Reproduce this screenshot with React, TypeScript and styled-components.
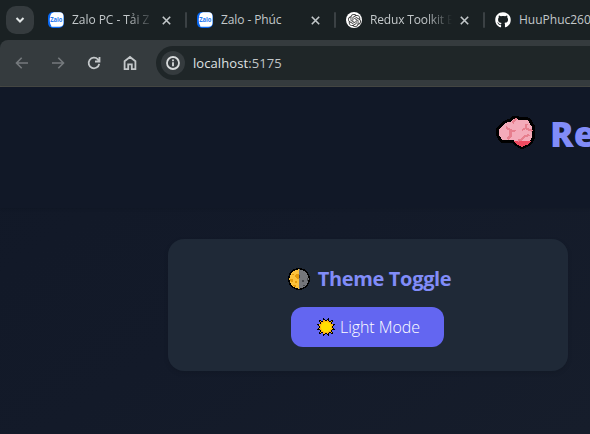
import React from "react";
import styled, { createGlobalStyle } from "styled-components";
import { FaGithub } from "react-icons/fa";
import { SiOpenai } from "react-icons/si";

const GlobalStyle = createGlobalStyle`
  * { box-sizing: border-box; }
  html, body { margin: 0; overflow: hidden; }
  body { font-family: "Open Sans", "Noto Sans", sans-serif; background: #111827; }
  svg { display: block; flex: none; }
`;

const Window = styled.div`
  width: 590px;
  height: 434px;
  overflow: hidden;
  display: flex;
  flex-direction: column;
`;

const TabStrip = styled.div`
  height: 40px;
  flex: none;
  display: flex;
  align-items: center;
  padding-left: 6px;
  background: #1a2123;
`;

const TabSearch = styled.div`
  width: 28px;
  height: 28px;
  flex: none;
  border-radius: 10px;
  background: #353b3e;
  display: grid;
  place-items: center;
  margin-right: 14px;
`;

const Tab = styled.div`
  width: 149px;
  height: 16px;
  flex: none;
  display: flex;
  align-items: center;
`;

const TabTitle = styled.span<{ $spacing: number; $fade?: boolean }>`
  width: 82px;
  margin-left: 8px;
  overflow: hidden;
  white-space: nowrap;
  font: 400 12px/18px "Open Sans", "Noto Sans", sans-serif;
  letter-spacing: ${(p) => p.$spacing}px;
  color: #c3c8ca;
  ${(p) => p.$fade && "mask-image: linear-gradient(to right, #000 56px, transparent 82px);"}
`;

const CloseSlot = styled.span`
  width: 9px;
  margin-left: 8px;
`;

const Separator = styled.span`
  width: 2px;
  height: 16px;
  margin-left: 14px;
  border-radius: 1px;
  background: #3b4144;
`;

const Favicon = styled.span<{ $round?: boolean }>`
  width: 16px;
  height: 16px;
  flex: none;
  display: grid;
  place-items: center;
  border-radius: ${(p) => (p.$round ? "8px" : "0")};
  background: ${(p) => (p.$round ? "#fff" : "transparent")};
  color: #333;
`;

const Frame = styled.div`
  height: 47px;
  flex: none;
  background: #1a2123;
`;

const Toolbar = styled.div`
  height: 47px;
  display: flex;
  align-items: center;
  padding-left: 14px;
  background: #353b3e;
  border-bottom: 1px solid #464844;
  border-top-left-radius: 8px;
`;

const NavIcon = styled.span<{ $dim?: boolean }>`
  width: 16px;
  height: 16px;
  margin-right: 20px;
  color: ${(p) => (p.$dim ? "#757a7d" : "#c4c8ca")};
`;

const AddressBar = styled.div`
  height: 34px;
  flex: 1;
  margin-left: -2px;
  display: flex;
  align-items: center;
  padding-left: 5px;
  border-radius: 17px 0 0 17px;
  background: #1f2628;
`;

const SiteInfo = styled.span`
  width: 24px;
  height: 24px;
  border-radius: 12px;
  display: grid;
  place-items: center;
  background: #353b3e;
  color: #d9dcdd;
`;

const Url = styled.span`
  margin-left: 8px;
  font: 400 13px/20px "Open Sans", "Noto Sans", sans-serif;
  letter-spacing: 0.08px;
  color: #dfe2e3;
`;

const Port = styled.span`
  color: #c0c5c7;
`;

const Page = styled.main`
  flex: 1;
  background: linear-gradient(145deg, #111827 0%, #131a29 50%, #161d2b 100%);
`;

const Header = styled.header`
  height: 121px;
  padding: 24px 0 0 496px;
  display: flex;
  align-items: flex-start;
  gap: 14px;
  overflow: hidden;
  background: #111827;
  box-shadow: 0 1px 3px rgba(0, 0, 0, 0.1);
`;

const BrandTitle = styled.h1`
  margin: 0;
  font: 800 35px/46px "Open Sans", "Noto Sans", sans-serif;
  color: #818cf8;
`;

const BrainSlot = styled.span`
  margin-top: 4px;
`;

const Card = styled.section`
  width: 400px;
  height: 132px;
  margin: 31px 0 0 168px;
  padding-top: 26px;
  display: flex;
  flex-direction: column;
  align-items: center;
  border-radius: 16px;
  background: #1f2937;
  box-shadow: 0 2px 5px rgba(0, 0, 0, 0.1);
`;

const CardTitle = styled.h2`
  margin: 0 0 0 3px;
  height: 28px;
  display: flex;
  align-items: center;
  gap: 8px;
  font: 700 20px/28px "Open Sans", "Noto Sans", sans-serif;
  letter-spacing: -0.33px;
  color: #818cf8;
`;

const ModeButton = styled.button`
  width: 153px;
  height: 40px;
  margin: 14px 0 0 -1px;
  padding: 0 0 0 2px;
  border: 0;
  border-radius: 12px;
  display: flex;
  align-items: center;
  justify-content: center;
  gap: 5px;
  background: #6366f1;
  color: #fff;
  font: 300 16px/24px "Open Sans", "Noto Sans", sans-serif;
  letter-spacing: -0.06px;
`;

const ZaloIcon = () => (
  <svg width="16" height="16" viewBox="0 0 16 16">
    <rect width="16" height="16" rx="5" fill="#0868f2" />
    <path d="M6 .3h5.500a4 4 0 0 1 4 4v6.500a4 4 0 0 1-4 4H6c-1 0-1.600.2-2.600-.1C3.500 14 3 13.300 2.600 12.500 1.200 9 1.600 3.500 3.600 1.200z" fill="#fff" />
    <text x="2.200" y="10" fontFamily="Open Sans, sans-serif" fontWeight="700" fontSize="6.500" textLength="12.300" lengthAdjust="spacingAndGlyphs" fill="#2877f0">Zalo</text>
  </svg>
);

const CloseIcon = () => (
  <svg width="9" height="9" viewBox="0 0 9 9" stroke="#c3c8ca" strokeWidth="1.600">
    <path d="M.8.8l7.400 7.400M8.200.8L.8 8.200" />
  </svg>
);

const ArrowIcon = ({ forward }: { forward?: boolean }) => (
  <svg width="16" height="16" viewBox="0 0 16 16" fill="none" stroke="currentColor" strokeWidth="1.600">
    <path d={forward ? "M2 8h11M8.300 2.800L13.500 8l-5.200 5.200" : "M14 8H3M7.700 2.800L2.500 8l5.200 5.200"} />
  </svg>
);

const ReloadIcon = () => (
  <svg width="16" height="16" viewBox="0 0 16 16" fill="none" stroke="currentColor" strokeWidth="1.800">
    <path d="M13.200 8.800A5.300 5.300 0 1 1 11.900 4.400L13.500 6M13.500 2v4.500H9" />
  </svg>
);

const HomeIcon = () => (
  <svg width="16" height="16" viewBox="0 0 16 16" fill="none" stroke="currentColor" strokeWidth="1.800">
    <path d="M2.600 14.200V6.200L8 2l5.400 4.200v8H9.800V9.300H6.200v4.900z" />
  </svg>
);

const InfoIcon = () => (
  <svg width="14" height="14" viewBox="0 0 14 14" fill="none" stroke="currentColor" strokeWidth="1.800">
    <circle cx="7" cy="7" r="6" />
    <path d="M7 6.200v4M7 3.600v1.600" />
  </svg>
);

const ChevronIcon = () => (
  <svg width="10" height="8" viewBox="0 0 10 8" fill="none" stroke="#e1e5e6" strokeWidth="2">
    <path d="M1.500 2L5 5.500 8.500 2" />
  </svg>
);

const BrainIcon = () => (
  <svg width="40" height="36" viewBox="0 0 40 36" shapeRendering="crispEdges">
    <path
      d="M5.500 10L8 7.500 12 5.500 14.500 5 17 2.500 20 2 24 3.500 30 3 34 5 35.500 9 38 12 37.500 17 38 21 36 26 32 30 26 33 21 30 16.500 26 5 26 2 21 1.800 14z"
      fill="#f4abba"
      stroke="#000"
      strokeWidth="3"
      strokeLinejoin="round"
    />
    <path d="M17.500 26h17.500l-3.500 3.500-5.500 2.500-5-2.500z" fill="#ef4b61" />
    <path d="M10 12l4.500 3.500 5 .3M14.500 15.500v5.500l-3 3M20.500 3.500l-4 4.500M30.500 9l-.5 4-4 2M30 13.500l6.500 2.500M33.500 20l-5 1.500-3.500 3.500-3 .5" fill="none" stroke="#e77f8e" strokeWidth="2.200" />
  </svg>
);

const MoonIcon = () => (
  <svg width="22" height="22" viewBox="0 0 22 22" shapeRendering="crispEdges">
    <circle cx="11" cy="11" r="11" fill="#000" />
    <circle cx="11" cy="11" r="9.700" fill="#fdc33b" />
    <path d="M11 1.300a9.700 9.700 0 0 1 0 19.400z" fill="#74767a" />
    <path d="M8 6h3v5H9L7 9zM2 11h3v3H3zM7 13h2v2H7zM4 6h2v1H4zM5 17h3v2H6z" fill="#e59b0b" />
    <path d="M11 7h1v3h-1zM14 12h2v2h-2zM19 10h1v3h-1zM15 17h2v1h-2z" fill="#45474a" />
  </svg>
);

const sunPoints = (outer: number, inner: number) =>
  Array.from({ length: 24 }, (_, i) => {
    const radius = i % 2 ? inner : outer;
    const angle = (i * Math.PI) / 12 + Math.PI / 12;
    return `${9 + radius * Math.cos(angle)},${9 + radius * Math.sin(angle)}`;
  }).join(" ");

const SunIcon = () => (
  <svg width="18" height="18" viewBox="0 0 18 18" shapeRendering="crispEdges">
    <polygon points={sunPoints(10, 6.8)} fill="#000" />
    <polygon points={sunPoints(8.2, 5.8)} fill="#ffb514" />
    <circle cx="9" cy="9" r="5" fill="#ffde00" />
  </svg>
);

const tabs = [
  { title: "Zalo PC - Tải Z", icon: <ZaloIcon />, spacing: -0.05, fade: true },
  { title: "Zalo - Phúc", icon: <ZaloIcon />, spacing: -0.1 },
  { title: "Redux Toolkit E", icon: <SiOpenai size={13} />, round: true, spacing: -0.15, fade: true },
];

export default function App() {
  return (
    <Window>
      <GlobalStyle />
      <TabStrip>
        <TabSearch><ChevronIcon /></TabSearch>
        {tabs.map((tab) => (
          <Tab key={tab.title}>
            <Favicon $round={tab.round}>{tab.icon}</Favicon>
            <TabTitle $spacing={tab.spacing} $fade={tab.fade}>{tab.title}</TabTitle>
            <CloseSlot><CloseIcon /></CloseSlot>
            <Separator />
          </Tab>
        ))}
        <Tab>
          <Favicon><FaGithub size={16} color="#fff" /></Favicon>
          <TabTitle $spacing={0}>HuuPhuc260</TabTitle>
        </Tab>
      </TabStrip>
      <Frame>
        <Toolbar>
          <NavIcon $dim><ArrowIcon /></NavIcon>
          <NavIcon $dim><ArrowIcon forward /></NavIcon>
          <NavIcon><ReloadIcon /></NavIcon>
          <NavIcon><HomeIcon /></NavIcon>
          <AddressBar>
            <SiteInfo><InfoIcon /></SiteInfo>
            <Url>localhost<Port>:5175</Port></Url>
          </AddressBar>
        </Toolbar>
      </Frame>
      <Page>
        <Header>
          <BrainSlot><BrainIcon /></BrainSlot>
          <BrandTitle>Re</BrandTitle>
        </Header>
        <Card>
          <CardTitle><MoonIcon />Theme Toggle</CardTitle>
          <ModeButton><SunIcon />Light Mode</ModeButton>
        </Card>
      </Page>
    </Window>
  );
}
